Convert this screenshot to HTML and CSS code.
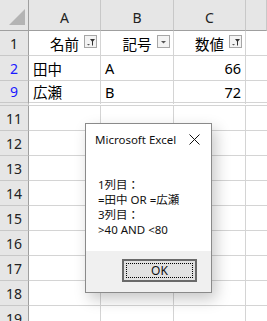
FILE: index.html
```html
<!DOCTYPE html>
<html lang="ja">
<head>
    <meta charset="UTF-8">
    <title>Excel</title>
    <link rel="stylesheet" href="styles.css">
</head>
<body>

<div class="sheet">
    <div class="corner"><span class="tri"></span></div>
    <div class="col-head">A</div>
    <div class="col-head">B</div>
    <div class="col-head">C</div>
    <div class="col-head last"></div>

    <div class="row-head">1</div>
    <div class="cell title">名前
        <span class="filter-btn">
            <svg width="13" height="13" viewBox="0 0 13 13"><rect x="0.5" y="0.5" width="12" height="12" fill="#f3f3f3" stroke="#a6a6a6"/><path d="M3 9h3l-1.5 1.5z" fill="#555"/><path d="M6 4h5l-2 2.5v4h-1v-4z" fill="#333"/></svg>
        </span>
    </div>
    <div class="cell title">記号
        <span class="filter-btn">
            <svg width="13" height="13" viewBox="0 0 13 13"><rect x="0.5" y="0.5" width="12" height="12" fill="#f3f3f3" stroke="#a6a6a6"/><path d="M4 6h5l-2.5 2.5z" fill="#555"/></svg>
        </span>
    </div>
    <div class="cell title">数値
        <span class="filter-btn">
            <svg width="13" height="13" viewBox="0 0 13 13"><rect x="0.5" y="0.5" width="12" height="12" fill="#f3f3f3" stroke="#a6a6a6"/><path d="M3 9h3l-1.5 1.5z" fill="#555"/><path d="M6 4h5l-2 2.5v4h-1v-4z" fill="#333"/></svg>
        </span>
    </div>
    <div class="cell last"></div>

    <div class="row-head blue">2</div>
    <div class="cell">田中</div>
    <div class="cell">A</div>
    <div class="cell num">66</div>
    <div class="cell last"></div>

    <div class="row-head blue hidden-after">9</div>
    <div class="cell hidden-after">広瀬</div>
    <div class="cell hidden-after">B</div>
    <div class="cell num hidden-after">72</div>
    <div class="cell last hidden-after"></div>

    <div class="row-head">11</div><div class="cell"></div><div class="cell"></div><div class="cell"></div><div class="cell last"></div>
    <div class="row-head">12</div><div class="cell"></div><div class="cell"></div><div class="cell"></div><div class="cell last"></div>
    <div class="row-head">13</div><div class="cell"></div><div class="cell"></div><div class="cell"></div><div class="cell last"></div>
    <div class="row-head">14</div><div class="cell"></div><div class="cell"></div><div class="cell"></div><div class="cell last"></div>
    <div class="row-head">15</div><div class="cell"></div><div class="cell"></div><div class="cell"></div><div class="cell last"></div>
    <div class="row-head">16</div><div class="cell"></div><div class="cell"></div><div class="cell"></div><div class="cell last"></div>
    <div class="row-head">17</div><div class="cell"></div><div class="cell"></div><div class="cell"></div><div class="cell last"></div>
    <div class="row-head">18</div><div class="cell"></div><div class="cell"></div><div class="cell"></div><div class="cell last"></div>
    <div class="row-head">19</div><div class="cell"></div><div class="cell"></div><div class="cell"></div><div class="cell last"></div>
</div>

<div class="dialog">
    <div class="dialog-title">
        <span>Microsoft Excel</span>
        <svg class="close" width="11" height="11" viewBox="0 0 11 11"><path d="M0.5 0.5l10 10M10.5 0.5l-10 10" stroke="#111" stroke-width="1"/></svg>
    </div>
    <div class="dialog-body">
        1列目：<br>
        =田中 OR =広瀬<br>
        3列目：<br>
        &gt;40 AND &lt;80
    </div>
    <div class="dialog-foot">
        <button class="ok-btn"><span>OK</span></button>
    </div>
</div>

</body>
</html>
```

FILE: styles.css
```css
* {
    box-sizing: border-box;
}
body {
    margin: 0;
    background: #fff;
    overflow: hidden;
    font-family: "Noto Sans", "Noto Sans CJK JP", sans-serif;
}
.sheet {
    display: grid;
    width: 267px;
    height: 321px;
    overflow: hidden;
    grid-template-columns: 29px 72px 73px 72px 1fr;
    grid-template-rows: 31px;
    grid-auto-rows: 25px;
}
.corner {
    background: #e6e6e6;
    border-right: 1px solid #9f9f9f;
    border-bottom: 1px solid #9f9f9f;
    position: relative;
}
.tri {
    position: absolute;
    left: 9px;
    top: 9px;
    width: 0;
    height: 0;
    border-left: 16px solid transparent;
    border-bottom: 16px solid #b4b4b4;
}
.col-head {
    background: #e6e6e6;
    border-right: 1px solid #c8c8c8;
    border-bottom: 1px solid #9f9f9f;
    display: flex;
    align-items: flex-end;
    justify-content: center;
    padding-bottom: 3px;
    font-size: 14px;
    color: #222;
}
.row-head {
    background: #e6e6e6;
    border-right: 1px solid #9f9f9f;
    border-bottom: 1px solid #c8c8c8;
    display: flex;
    align-items: center;
    justify-content: center;
    font-size: 14px;
    color: #222;
}
.row-head.blue {
    color: #1a1aff;
}
.cell {
    border-right: 1px solid #d4d4d4;
    border-bottom: 1px solid #d4d4d4;
    display: flex;
    align-items: center;
    padding: 0 4px;
    font-size: 14.5px;
    color: #000;
}
.cell.title {
    justify-content: center;
    position: relative;
}
.cell.num {
    justify-content: flex-end;
}
.cell.last {
    border-right: none;
}
.hidden-after {
    border-bottom: 4px double #c8c8c8;
}
.cell.hidden-after {
    border-bottom-color: #d4d4d4;
}
.filter-btn {
    position: absolute;
    right: 3px;
    top: 4px;
    width: 13px;
    height: 13px;
}
.filter-btn svg {
    display: block;
}

.dialog {
    position: absolute;
    left: 85px;
    top: 123px;
    width: 127px;
    height: 170px;
    border: 1px solid #8a8a8a;
    background: #fff;
    box-shadow: 4px 6px 14px rgba(0, 0, 0, 0.22);
    display: flex;
    flex-direction: column;
    font-size: 11.5px;
    color: #111;
}
.dialog-title {
    height: 30px;
    display: flex;
    align-items: center;
    justify-content: space-between;
    padding: 0 11px 0 9px;
}
.close {
    display: block;
}
.dialog-body {
    flex: 1;
    padding: 23px 12px 0;
    line-height: 15px;
}
.dialog-foot {
    height: 41px;
    background: #f0f0f0;
    display: flex;
    justify-content: flex-end;
    padding-top: 8px;
    padding-right: 14px;
}
.ok-btn {
    width: 75px;
    height: 23px;
    padding: 2px;
    background: #e1e1e1;
    border: 2px solid #6a6a6a;
    font-family: inherit;
    font-size: 12px;
    color: #111;
}
.ok-btn span {
    display: flex;
    align-items: center;
    justify-content: center;
    height: 100%;
    border: 1px dotted #000;
}
```
